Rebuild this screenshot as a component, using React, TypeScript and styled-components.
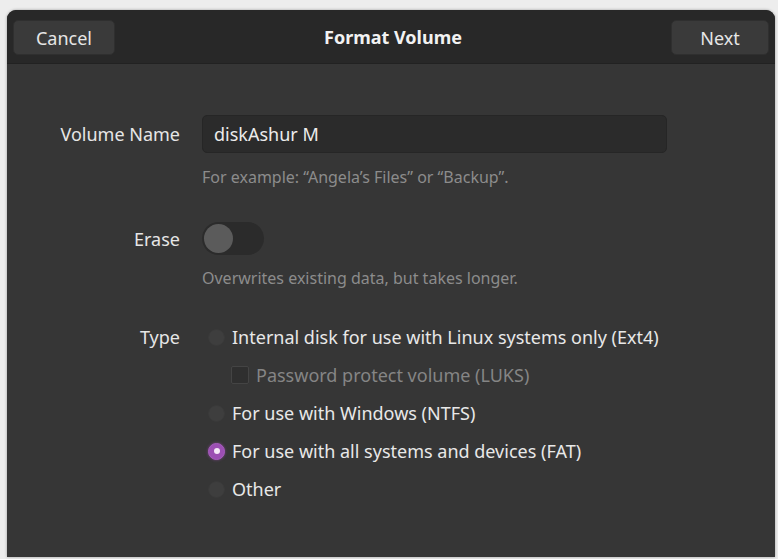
import React, { useState } from 'react'
import styled, { createGlobalStyle } from 'styled-components'

const GlobalStyle = createGlobalStyle`
  html, body {
    margin: 0;
    padding: 0;
    background: #ededed;
  }
  body {
    font-family: "Noto Sans", "Open Sans", sans-serif;
    -webkit-font-smoothing: antialiased;
  }
`

const Page = styled.div`
  width: 778px;
  height: 559px;
  padding: 10px 3px 2px 7px;
  box-sizing: border-box;
`

const Window = styled.div`
  height: 100%;
  display: flex;
  flex-direction: column;
  background: #363636;
  border-radius: 9px 9px 0 0;
  overflow: hidden;
  box-shadow: 0 0 3px rgba(0, 0, 0, 0.35);
`

const HeaderBar = styled.div`
  height: 54px;
  flex-shrink: 0;
  display: flex;
  align-items: flex-start;
  justify-content: space-between;
  padding: 10px 6px 0 6px;
  box-sizing: border-box;
  background: #282828;
  border-bottom: 1px solid #222;
`

const HeaderButton = styled.button<{ $width: number }>`
  width: ${p => p.$width}px;
  height: 35px;
  border: 1px solid #2f2f2f;
  border-radius: 5px;
  background: #3a3a3a;
  color: #e6e6e6;
  font-family: inherit;
  font-size: 18px;
  padding: 0;
  cursor: pointer;
`

const Title = styled.div`
  line-height: 35px;
  color: #f2f2f2;
  font-size: 18px;
  font-weight: 700;
`

const Form = styled.div`
  display: grid;
  grid-template-columns: 173px 465px;
  column-gap: 22px;
  padding-top: 51px;
`

const Label = styled.div<{ $height: number }>`
  height: ${p => p.$height}px;
  display: flex;
  align-items: center;
  justify-content: flex-end;
  color: #e6e6e6;
  font-size: 18px;
`

const Field = styled.div<{ $spaceAfter: number }>`
  display: flex;
  flex-direction: column;
  margin-bottom: ${p => p.$spaceAfter}px;
`

const Entry = styled.input`
  height: 38px;
  box-sizing: border-box;
  border: 1px solid #262626;
  border-radius: 5px;
  background: #2b2b2b;
  color: #ececec;
  font-family: inherit;
  font-size: 18px;
  padding: 0 11px;
  outline: none;
`

const Hint = styled.div<{ $gap: number }>`
  margin-top: ${p => p.$gap}px;
  line-height: 20px;
  font-size: 16px;
  color: #8c8c8c;
`

const Track = styled.div<{ $on: boolean }>`
  width: 62px;
  height: 33px;
  border-radius: 17px;
  background: ${p => (p.$on ? '#9a4fae' : '#2b2b2b')};
  padding: 2px;
  box-sizing: border-box;
  display: flex;
  justify-content: ${p => (p.$on ? 'flex-end' : 'flex-start')};
  cursor: pointer;
`

const Knob = styled.div`
  width: 29px;
  height: 29px;
  border-radius: 50%;
  background: #5b5b5b;
`

const Options = styled.div`
  display: flex;
  flex-direction: column;
`

const OptionRow = styled.label<{ $indent?: boolean; $dim?: boolean }>`
  height: 38px;
  display: flex;
  align-items: center;
  gap: 7px;
  padding-left: ${p => (p.$indent ? '29px' : '6px')};
  color: ${p => (p.$dim ? '#858585' : '#e8e8e8')};
  font-size: 18px;
  white-space: nowrap;
  cursor: pointer;
`

const Radio = styled.span<{ $checked: boolean }>`
  width: 17px;
  height: 17px;
  border-radius: 50%;
  box-sizing: border-box;
  flex-shrink: 0;
  background: ${p => (p.$checked ? '#9c4fb3' : '#3e3e3e')};
  border: 1px solid ${p => (p.$checked ? '#a65cbd' : '#3a3a3a')};
  display: flex;
  align-items: center;
  justify-content: center;
  box-shadow: ${p => (p.$checked ? '0 0 3px rgba(170, 80, 190, 0.6)' : 'none')};

  &::after {
    content: '';
    width: 6px;
    height: 6px;
    border-radius: 50%;
    background: #f6e8f8;
    display: ${p => (p.$checked ? 'block' : 'none')};
  }
`

const Checkbox = styled.span`
  width: 18px;
  height: 18px;
  box-sizing: border-box;
  flex-shrink: 0;
  border: 1px solid #444;
  border-radius: 2px;
  background: #2f2f2f;
`

const types = [
  'Internal disk for use with Linux systems only (Ext4)',
  'For use with Windows (NTFS)',
  'For use with all systems and devices (FAT)',
  'Other',
]

export default function App() {
  const [name, setName] = useState('diskAshur M')
  const [erase, setErase] = useState(false)
  const [type, setType] = useState(2)

  return (
    <>
      <GlobalStyle />
      <Page>
        <Window>
          <HeaderBar>
            <HeaderButton $width={102}>Cancel</HeaderButton>
            <Title>Format Volume</Title>
            <HeaderButton $width={98}>Next</HeaderButton>
          </HeaderBar>

          <Form>
            <Label $height={38}>Volume Name</Label>
            <Field $spaceAfter={35}>
              <Entry value={name} onChange={e => setName(e.target.value)} />
              <Hint $gap={14}>For example: “Angela’s Files” or “Backup”.</Hint>
            </Field>

            <Label $height={33}>Erase</Label>
            <Field $spaceAfter={30}>
              <Track $on={erase} onClick={() => setErase(!erase)}>
                <Knob />
              </Track>
              <Hint $gap={13}>Overwrites existing data, but takes longer.</Hint>
            </Field>

            <Label $height={38}>Type</Label>
            <Options>
              {types.map((t, i) => (
                <React.Fragment key={t}>
                  <OptionRow onClick={() => setType(i)}>
                    <Radio $checked={type === i} />
                    {t}
                  </OptionRow>
                  {i === 0 && (
                    <OptionRow $indent $dim>
                      <Checkbox />
                      Password protect volume (LUKS)
                    </OptionRow>
                  )}
                </React.Fragment>
              ))}
            </Options>
          </Form>
        </Window>
      </Page>
    </>
  )
}
